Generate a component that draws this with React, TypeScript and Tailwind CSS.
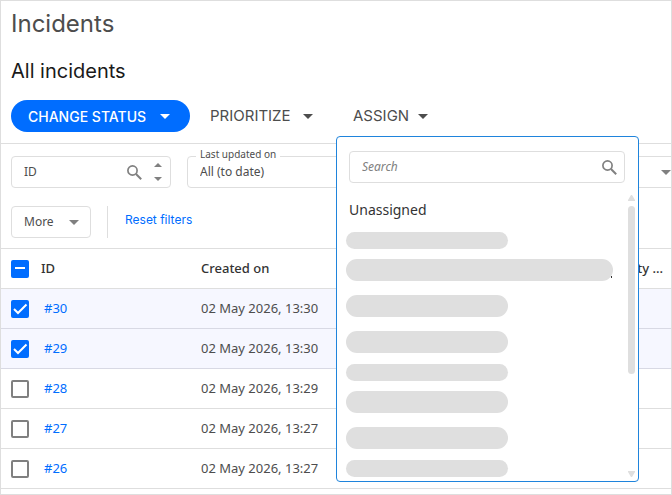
import { useEffect, useRef, useState } from "react";
import clsx from "clsx";

const incidents = [
  { id: 30, created: "02 May 2026, 13:30" },
  { id: 29, created: "02 May 2026, 13:30" },
  { id: 28, created: "02 May 2026, 13:29" },
  { id: 27, created: "02 May 2026, 13:27" },
  { id: 26, created: "02 May 2026, 13:27" },
];

// Redacted user names in the assign menu
const people = ["small", "wide", "normal", "normal", "small", "normal", "normal", "small"];

function Caret({ className }: { className?: string }) {
  return (
    <svg viewBox="0 0 10 5" className={clsx("h-[5px] w-[10px] shrink-0 fill-current", className)} aria-hidden="true">
      <path d="M0 0h10L5 5z" />
    </svg>
  );
}

function StepArrow({ up = false }: { up?: boolean }) {
  return (
    <svg viewBox="0 0 8 4" className="block h-1 w-2 fill-current" aria-hidden="true">
      <path d={up ? "M0 4h8L4 0z" : "M0 0h8L4 4z"} />
    </svg>
  );
}

function SearchIcon() {
  return (
    <svg viewBox="0 0 15 15" className="size-[15px] shrink-0 text-[#808080]" fill="none" stroke="currentColor" aria-hidden="true">
      <circle cx="5.5" cy="5.5" r="4.6" strokeWidth="1.7" />
      <path d="M9 9l5.2 5.2" strokeWidth="2" />
    </svg>
  );
}

type CheckboxProps = { label: string; checked: boolean; indeterminate?: boolean; onChange: () => void };

function Checkbox({ label, checked, indeterminate = false, onChange }: CheckboxProps) {
  const ref = useRef<HTMLInputElement>(null);

  useEffect(() => {
    if (ref.current) ref.current.indeterminate = indeterminate;
  }, [indeterminate]);

  const filled = checked || indeterminate;

  return (
    <label className="relative block size-[18px]">
      <input
        ref={ref}
        type="checkbox"
        aria-label={label}
        checked={checked}
        onChange={onChange}
        className={clsx(
          "block size-[18px] appearance-none rounded-xs",
          filled ? "bg-[#006dff]" : "border-2 border-[#808080] bg-white"
        )}
      />
      {filled && (
        <svg viewBox="0 0 18 18" className="pointer-events-none absolute inset-0 size-[18px]" fill="none" stroke="white" strokeWidth="2">
          <path d={indeterminate ? "M4 8h10" : "M3 9l4 4 8.5-8.5"} />
        </svg>
      )}
    </label>
  );
}

function AssignMenu() {
  return (
    <div className="absolute top-[36px] left-0 z-10 w-[303px] rounded-sm border border-[#1f84dc] bg-white pt-[14px] pb-px">
      <div className="mr-[13px] ml-3 flex h-8 items-center rounded-sm border border-[#dedede] pr-[7px] pl-3">
        <input
          type="search"
          aria-label="Search"
          placeholder="Search"
          className="min-w-0 flex-1 text-[12px] outline-none placeholder:text-[#808080] placeholder:italic"
        />
        <SearchIcon />
      </div>
      <div className="mt-[9px] flex">
        <ul className="min-w-0 flex-1 pl-[9px]">
          <li className="flex h-9 items-center pl-[3px]">
            <button type="button" className="text-[14px] leading-5 text-[#333333]">Unassigned</button>
          </li>
          {people.map((size, i) => (
            <li key={i} className={clsx("flex items-center", size === "small" ? "h-6" : "h-9")}>
              <span
                className={clsx(
                  "flex items-end justify-end rounded-full bg-[#dfdfdf]",
                  size === "small" ? "h-[17px]" : "h-[22px]",
                  size === "wide" ? "w-[267px]" : "w-[162px]"
                )}
              >
                {size === "wide" && <span className="mr-px mb-[3px] h-[2px] w-px bg-[#333333]" />}
              </span>
            </li>
          ))}
        </ul>
        <div className="mr-[3px] flex w-[7px] flex-col items-center py-[3px] text-[#dfdfdf]">
          <svg viewBox="0 0 7 6" className="h-[6px] w-[7px] fill-current"><path d="M0 6V5L3 0h1l3 5v1z" /></svg>
          <div className="mt-[5px] h-[168px] w-full rounded-full bg-[#dfdfdf]" />
          <svg viewBox="0 0 7 6" className="mt-auto h-[6px] w-[7px] fill-current"><path d="M0 0v1l3 5h1l3-5V0z" /></svg>
        </div>
      </div>
    </div>
  );
}

function Toolbar() {
  return (
    <div className="flex border-b border-[#dedede] pb-[11px] pl-[10px] font-['Inter',sans-serif]">
      <button type="button" className="flex h-8 w-[179px] items-center justify-between rounded-full bg-[#006dff] pr-5 pl-[17px] text-[14px] font-medium text-white">
        CHANGE STATUS
        <Caret />
      </button>
      <button type="button" className="ml-1 flex h-8 w-[132px] items-center justify-between pr-[13px] pl-4 text-[15px] text-[#4d4d4d]">
        PRIORITIZE
        <Caret />
      </button>
      <div className="relative ml-[10px]">
        <button type="button" aria-expanded="true" className="flex h-8 w-[106px] items-center justify-between pr-[14px] pl-[17px] text-[15px] text-[#4d4d4d]">
          ASSIGN
          <Caret />
        </button>
        <div className="font-['Noto_Sans',sans-serif]">
          <AssignMenu />
        </div>
      </div>
    </div>
  );
}

function Filters() {
  return (
    <div className="border-b border-[#dedede] pt-3 pb-[10px] pl-[10px] text-[12px] text-[#4d4d4d]">
      <div className="flex gap-4">
        <div className="flex h-8 w-[160px] shrink-0 items-center rounded-sm border border-[#dedede] pr-2 pl-3">
          <input type="text" inputMode="numeric" aria-label="ID" placeholder="ID" className="min-w-0 flex-1 outline-none placeholder:text-[#4d4d4d]" />
          <SearchIcon />
          <div className="ml-3 flex flex-col gap-[10px] text-[#808080]">
            <button type="button" aria-label="Increase"><StepArrow up /></button>
            <button type="button" aria-label="Decrease"><StepArrow /></button>
          </div>
        </div>
        <div className="relative min-w-0 flex-1">
          <label htmlFor="updated" className="absolute -top-[10px] left-[9px] bg-white px-1 text-[10px] leading-4">Last updated on</label>
          <select id="updated" className="block h-8 w-full appearance-none rounded-sm border border-[#dedede] pl-3 outline-none">
            <option>All (to date)</option>
          </select>
        </div>
        <div className="relative min-w-0 flex-1">
          <select aria-label="Priority" className="block h-8 w-full appearance-none rounded-l-sm border border-r-0 border-[#dedede] outline-none">
            <option></option>
          </select>
          <Caret className="pointer-events-none absolute top-[14px] right-0 text-[#808080]" />
        </div>
      </div>
      <div className="mt-[18px] flex">
        <button type="button" className="flex h-8 w-[80px] items-center justify-between rounded-sm border border-[#dedede] pr-[11px] pl-3">
          More
          <Caret className="text-[#808080]" />
        </button>
        <div className="ml-4 border-l border-[#dedede] pl-[17px]">
          <a href="#" className="block font-['Inter',sans-serif] leading-7 text-[#006dff]">Reset filters</a>
        </div>
      </div>
    </div>
  );
}

export default function App() {
  const [selected, setSelected] = useState<number[]>([30, 29]);

  const toggle = (id: number) =>
    setSelected((prev) => (prev.includes(id) ? prev.filter((x) => x !== id) : [...prev, id]));

  const all = selected.length === incidents.length;

  return (
    <main className="min-h-screen overflow-hidden border border-[#dedede] bg-white font-['Noto_Sans',sans-serif]">
      <h1 className="pt-[7px] pl-[10px] font-['Inter',sans-serif] text-[24px] leading-8 text-[#4d4d4d]">Incidents</h1>
      <h2 className="mt-[19px] mb-[17px] pl-[10px] font-['Inter',sans-serif] text-[20px] leading-6 text-[#1a1a1a]">All incidents</h2>
      <Toolbar />
      <Filters />
      <table className="w-full table-fixed border-separate border-spacing-0 text-left text-[13px] text-[#4d4d4d]">
        <thead>
          <tr className="h-10 text-[#333333]">
            <th className="w-[40px] border-b border-[#dedede] pl-[10px]">
              <Checkbox
                label="Select all"
                checked={all}
                indeterminate={!all && selected.length > 0}
                onChange={() => setSelected(all ? [] : incidents.map((x) => x.id))}
              />
            </th>
            <th className="w-[160px] border-b border-[#dedede] font-medium">ID</th>
            <th className="border-b border-[#dedede] font-medium">Created on</th>
            <th className="border-b border-[#dedede] pr-2 text-right font-medium">Priority ...</th>
          </tr>
        </thead>
        <tbody>
          {incidents.map(({ id, created }) => {
            const on = selected.includes(id);
            const cell = on ? "border-b border-[#d8d9e4] bg-[#f6f7ff]" : "border-b border-[#dedede]";
            return (
              <tr key={id} className="h-10">
                <td className={clsx(cell, "pl-[10px]")}>
                  <Checkbox label={`Select incident ${id}`} checked={on} onChange={() => toggle(id)} />
                </td>
                <td className={clsx(cell, "pl-[3px]")}>
                  <a href="#" className="text-[#006dff]">#{id}</a>
                </td>
                <td className={cell}>{created}</td>
                <td className={cell} />
              </tr>
            );
          })}
        </tbody>
      </table>
    </main>
  );
}
